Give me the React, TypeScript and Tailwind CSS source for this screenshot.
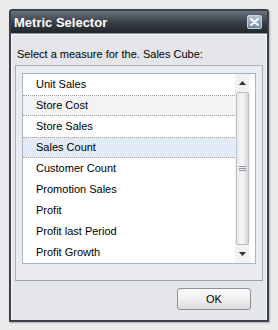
import React from 'react';

const measures = [
  'Unit Sales',
  'Store Cost',
  'Store Sales',
  'Sales Count',
  'Customer Count',
  'Promotion Sales',
  'Profit',
  'Profit last Period',
  'Profit Growth',
];

function App() {
  return (
    <div
      className="w-[278px] h-[330px] bg-[#ebebeb] pl-[9px] pr-[9px] pt-[9px] pb-[8px] text-[11px] text-black"
      style={{ fontFamily: '"Liberation Sans", Arial, sans-serif' }}
    >
      <div className="h-full flex flex-col border-2 border-[#39404a] rounded-t-[3px] bg-[#e4e6e9] shadow-[1px_1px_2px_rgba(0,0,0,0.25)]">
        {/* title bar */}
        <div className="h-[23px] flex items-center justify-between pl-[3px] pr-[5px] bg-gradient-to-b from-[#6a737e] via-[#3b4149] to-[#22262b] border-b border-[#8b949e]">
          <span className="text-[13px] font-bold text-white leading-none">Metric Selector</span>
          <div className="w-[15px] h-[14px] rounded-[2px] border border-[#c5d0de] bg-gradient-to-b from-[#b6c4d6] to-[#7285a0] flex items-center justify-center">
            <svg width="9" height="8" viewBox="0 0 9 8">
              <path d="M1 1 L8 7 M8 1 L1 7" stroke="white" strokeWidth="2" strokeLinecap="round" />
            </svg>
          </div>
        </div>

        {/* body */}
        <div className="flex-1 flex flex-col border-l border-t border-r border-[#f6f8fb] px-[3px] pt-[12px]">
          <div className="pl-[2px] leading-[15px]">Select a measure for the. Sales Cube:</div>

          <div className="mt-[3px] h-[216px] border border-[#a9b0b8] border-b-[#9aa2ab] bg-[#e9ebee] pt-[7px] pl-[6px] pr-[6px]">
            <div className="h-[191px] flex border border-[#a6b6c9] bg-white">
              <div className="flex-1 flex flex-col">
                {measures.map((m, i) => (
                  <div
                    key={m}
                    className={`h-[21px] flex items-center pl-[13px] ${
                      i === 1
                        ? 'bg-[#f3f3f3] border-y border-dotted border-[#a0a0a0]'
                        : i === 3
                        ? 'bg-[#e2eaf7] border-y border-dotted border-[#a0a0a0]'
                        : ''
                    }`}
                  >
                    {m}
                  </div>
                ))}
              </div>
              {/* scrollbar */}
              <div className="w-[15px] mr-[5px] flex flex-col bg-[#f1f2f4]">
                <div className="h-[18px] flex items-center justify-center">
                  <svg width="7" height="4" viewBox="0 0 7 4">
                    <path d="M0 4 L3.5 0 L7 4 Z" fill="#333" />
                  </svg>
                </div>
                <div className="flex-1 mx-[1px] rounded-[2px] border border-[#b9bec5] bg-gradient-to-r from-[#e9eaec] via-[#f6f6f7] to-[#d2d5d9] flex items-center justify-center">
                  <svg width="7" height="6" viewBox="0 0 7 6">
                    <path d="M0 0.5 H7 M0 2.5 H7 M0 4.5 H7" stroke="#8a9099" strokeWidth="1" />
                  </svg>
                </div>
                <div className="h-[18px] flex items-center justify-center">
                  <svg width="7" height="4" viewBox="0 0 7 4">
                    <path d="M0 0 L7 0 L3.5 4 Z" fill="#333" />
                  </svg>
                </div>
              </div>
            </div>
          </div>

          <div className="flex justify-end pr-[12px] pt-[7px]">
            <button className="w-[74px] h-[22px] rounded-[3px] border border-[#8d9298] bg-gradient-to-b from-[#fafafa] via-[#f0f0f0] to-[#dcdcdc] text-[11px] leading-none">
              OK
            </button>
          </div>
        </div>
      </div>
    </div>
  );
}

export default App;
